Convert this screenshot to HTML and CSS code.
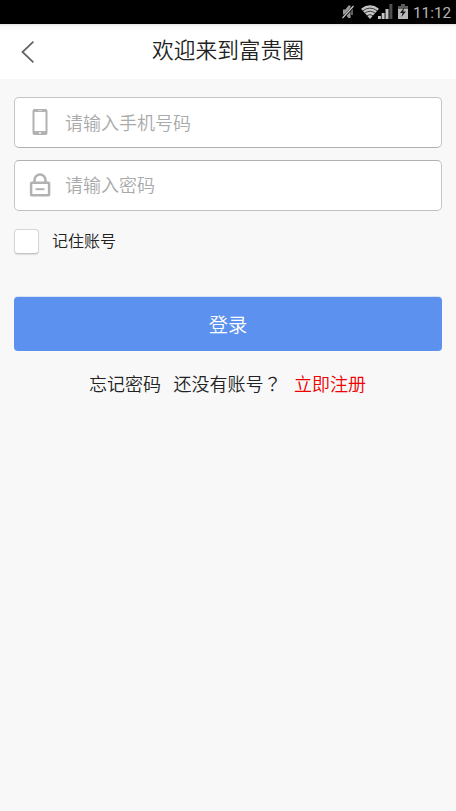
FILE: index.html
```html
<!DOCTYPE html>
<html lang="zh-CN">
<head>
<meta charset="utf-8">
<meta name="viewport" content="width=device-width, initial-scale=1">
<title>欢迎来到富贵圈</title>
<link rel="stylesheet" href="styles.css">
</head>
<body>
<div class="status-bar">
  <svg class="mute" width="14" height="16" viewBox="0 0 14 16"><path fill="#999" d="M2 5.5h2.4L7.5 1.5h2V14h-2L4.4 10.5H2z"/><path d="M11 5v6" stroke="#888" stroke-width="1.4"/><path d="M1.8 14.2 12.8 2" stroke="#000" stroke-width="2.6"/><path d="M1.5 14 12.5 2" stroke="#c4c4c4" stroke-width="1.3"/></svg>
  <svg class="wifi" width="18" height="14" viewBox="0 0 18 14"><path fill="#c4c4c4" d="M0 3.7Q9-3.1 18 3.7L9 14z"/><path d="M1.8 5.8Q9 .4 16.2 5.8M3.8 8.2Q9 4.2 14.2 8.2M6 10.7Q9 8.4 12 10.7" fill="none" stroke="#000" stroke-width=".7"/></svg>
  <svg class="signal" width="15" height="15" viewBox="0 0 15 15"><path fill="#c4c4c4" d="M0 12h2.9v3H0zM3.7 9h2.9v6H3.7zM7.5 5h3v10h-3z"/><path fill="#505050" d="M11.4 0h3v15h-3z"/></svg>
  <svg class="battery" width="10" height="15" viewBox="0 0 10 15"><path fill="#5c5c5c" d="M0 2h3V0h4v2h3v4H0z"/><path fill="#b8b8b8" d="M0 5h10v10H0z"/><path fill="#161616" d="M6.5 3 2 9h2.6L3.3 13 8 7.4H5.2z"/></svg>
  <span class="clock">11:12</span>
</div>
<header class="header">
  <svg class="back" width="14" height="22" viewBox="0 0 14 22"><path d="M12.4.7 1.5 11l10.9 10.3" fill="none" stroke="#666" stroke-width="1.8"/></svg>
  <h1 class="title">欢迎来到富贵圈</h1>
</header>
<main class="login">
  <label class="field">
    <svg class="field-icon" width="22" height="28" viewBox="0 0 22 28"><rect x="3.5" y="1" width="15" height="26" rx="2" fill="#b2b2b2"/><path fill="#fff" d="M5.5 4h11v19h-11zM9 2.2h4v.6H9zM10 24.2h2v1.4h-2z"/></svg>
    <input class="input" type="text" placeholder="请输入手机号码">
  </label>
  <label class="field password">
    <svg class="field-icon" width="22" height="28" viewBox="0 0 22 28"><path d="M5.5 12V10a5.5 5.5 0 0 1 11 0v2" fill="none" stroke="#b2b2b2" stroke-width="2.6"/><rect x="2.1" y="12.7" width="18" height="12.5" rx=".6" fill="none" stroke="#b2b2b2" stroke-width="2.5"/><path d="M6.5 19.2h9" stroke="#b2b2b2" stroke-width="2"/></svg>
    <input class="input" type="password" placeholder="请输入密码">
  </label>
  <label class="remember"><span class="checkbox"></span><span class="remember-text">记住账号</span></label>
  <button class="submit" type="button">登录</button>
  <nav class="links"><a>忘记密码</a><a>还没有账号<span class="question" lang="zh-TW">？</span></a><a class="register">立即注册</a></nav>
</main>
</body>
</html>
```
FILE: styles.css
```css
* { box-sizing: border-box; }
body {
  margin: 0;
  min-height: 811px;
  background: #f8f8f8;
  color: #222;
  font-family: "Noto Sans CJK SC", sans-serif;
  font-weight: 350;
}
svg { display: block; flex: none; }
.status-bar {
  display: flex;
  align-items: flex-start;
  height: 24px;
  padding: 4px 5px 0 0;
  justify-content: flex-end;
  background: #000;
}
.mute { margin-right: 6px; }
.wifi { margin: 1px -1px 0 0; }
.battery { margin-left: 5px; }
.clock {
  width: 38px;
  margin-left: 5px;
  color: #b5b5b5;
  font: 15.3px/18px Roboto, sans-serif;
  white-space: nowrap;
}
.header {
  display: grid;
  grid-template-columns: 42px 1fr 42px;
  align-items: center;
  height: 55px;
  background: linear-gradient(#e2e2e2, #f8f8f8 2px, #fff 7px);
}
.back { margin-left: 21px; }
.title {
  margin: 0;
  padding-bottom: 5px;
  font-size: 21.7px;
  line-height: 32px;
  font-weight: 350;
  text-align: center;
}
.login { padding: 18px 14px 0; }
.field {
  display: flex;
  align-items: center;
  height: 51px;
  padding: 0 0 2px 14px;
  margin-bottom: 12px;
  border: 1px solid #c4c4c4;
  border-bottom-color: #b0b0b0;
  border-radius: 5px;
  background: #fff;
}
.password {
  padding-bottom: 4px;
  border-color: #b0b0b0 #c4c4c4 #c0c0c0;
}
.input {
  flex: 1;
  min-width: 0;
  height: 30px;
  margin-left: 14px;
  padding: 0;
  border: 0;
  outline: 0;
  background: transparent;
  font: 350 18px/30px "Noto Sans CJK SC", sans-serif;
}
.input::placeholder { color: #aaa; opacity: 1; }
.remember {
  display: flex;
  align-items: center;
  height: 26px;
  margin-top: 17px;
  font-size: 16px;
  line-height: 24px;
}
.remember-text { padding-bottom: 2px; }
.checkbox {
  width: 25px;
  height: 25px;
  margin-right: 13px;
  border: 1px solid #d6d6d6;
  border-bottom-color: #c4c4c4;
  border-radius: 4px;
  background: #fff;
  box-shadow: 0 1px 1px #ddd;
}
.submit {
  display: block;
  width: 100%;
  height: 54px;
  margin-top: 43px;
  padding: 0;
  border: 0;
  border-radius: 4px;
  background: #5c91ef;
  box-shadow: 0 -1px 0 #d9e2f2;
  color: #fff;
  font: 350 19.3px/54px "Noto Sans CJK SC", sans-serif;
}
.links {
  display: flex;
  justify-content: center;
  gap: 12.5px;
  margin: 19px 1px 0 0;
  font-size: 18px;
  line-height: 27px;
  white-space: nowrap;
}
.question { font-family: "Noto Sans CJK TC", sans-serif; }
.register { color: #f00000; }
```
